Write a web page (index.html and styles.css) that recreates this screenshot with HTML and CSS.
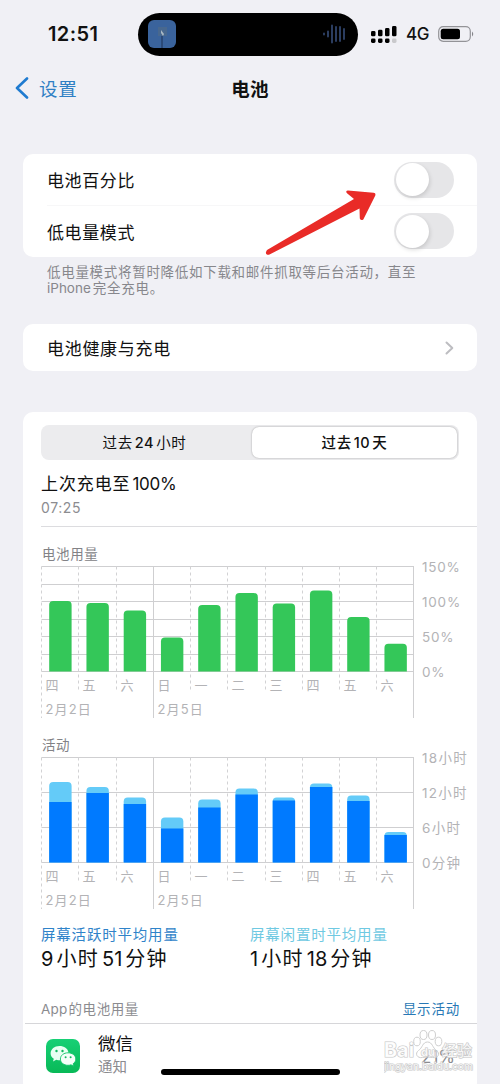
FILE: index.html
```html
<!DOCTYPE html>
<html lang="zh-CN">
<head>
<meta charset="utf-8">
<title>电池</title>
<link rel="stylesheet" href="styles.css">
</head>
<body>
<div class="phone">
  <header class="status">
    <span class="clock">12:51</span>
    <div class="island">
      <svg class="cover" width="28" height="28" viewBox="0 0 28 28"><rect width="28" height="28" rx="6" fill="#3a639c"/><rect x="10" y="7" width="9" height="9" fill="#48688f"/><path d="M13 10l3 4-1 2-2-3z" fill="#a9b9c4"/><path d="M14 16v12" stroke="#1d3355" stroke-width="1"/></svg>
      <svg class="wave" width="26" height="20" viewBox="0 0 26 20" stroke="#2b3d60" stroke-width="2" stroke-linecap="round"><path d="M2 9.500v1M6 7.500v5M10 1.500v17M14 3v14M18 3v14M22 5v10"/></svg>
    </div>
    <svg class="signal" width="27" height="19" viewBox="0 0 27 19"><g fill="#000"><rect x="0" y="6" width="4.500" height="5.300" rx="1.400"/><rect x="7" y="4.700" width="4.500" height="6.600" rx="1.400"/><rect x="14" y="3" width="4.500" height="8.300" rx="1.400"/><rect x="21" y="1" width="4.500" height="10.300" rx="1.400"/><rect x="0" y="13.400" width="4.500" height="4.600" rx="1.400"/><rect x="7" y="13.400" width="4.500" height="4.600" rx="1.400"/><rect x="14" y="13.400" width="4.500" height="4.600" rx="1.400"/></g><rect x="21" y="13.400" width="4.500" height="4.600" rx="1.400" fill="#c9c9cc"/></svg>
    <span class="net">4G</span>
    <svg class="battery" width="37" height="16" viewBox="0 0 37 16"><rect x=".7" y=".7" width="31.600" height="14.600" rx="4.500" fill="none" stroke="#939397" stroke-width="1.200"/><rect x="2.700" y="2.700" width="19.300" height="10.600" rx="2.500"/><path d="M34 5.500q2.500 2.500 0 5z" fill="#85858a"/></svg>
  </header>

  <nav class="nav">
    <a class="back"><svg width="14" height="22" viewBox="0 0 14 22"><path d="M12 1.500L2 11l10 9.500" fill="none" stroke="#1f7bd0" stroke-width="2.600" stroke-linecap="round" stroke-linejoin="round"/></svg><span>设置</span></a>
    <h1>电池</h1>
  </nav>

  <section class="card switches">
    <div class="row"><span>电池百分比</span><i class="toggle"></i></div>
    <div class="row"><span>低电量模式</span><i class="toggle"></i></div>
    <svg class="arrow" width="112" height="68" viewBox="0 0 112 68"><path d="M4.500 64.500L94.500 18.500L94.800 28.500Q96 31 98.300 29.500L110.300 5.500Q111 3 108.500 2.700L83 .5Q80 1 82 3.200L89 9L2 60Q0 63 1.500 64.300Q3 65.300 4.500 64.500Z" fill="#e92b27"/></svg>
  </section>
  <p class="hint">低电量模式将暂时降低如下载和邮件抓取等后台活动，直至<br><span class="latin">iPhone</span>完全充电。</p>

  <section class="card health">
    <span>电池健康与充电</span>
    <svg width="9" height="14" viewBox="0 0 9 14"><path d="M1.500 1.500L7.300 7l-5.800 5.500" fill="none" stroke="#bdbdc1" stroke-width="2" stroke-linecap="round" stroke-linejoin="round"/></svg>
  </section>

  <section class="card usage">
    <div class="segments"><span>过去<b>24</b>小时</span><span class="on">过去<b>10</b>天</span></div>
    <div class="last"><strong>上次充电至<b>100%</b></strong><small>07:25</small></div>

    <h2 class="chart-title">电池用量</h2>
    <svg class="chart" id="energy" width="436" height="166" viewBox="41 556 436 166"></svg>
    <h2 class="chart-title second">活动</h2>
    <svg class="chart" id="activity" width="436" height="166" viewBox="41 556 436 166"></svg>

    <div class="averages">
      <div><span class="active">屏幕活跃时平均用量</span><strong><b>9</b>小时<b>51</b>分钟</strong></div>
      <div><span class="idle">屏幕闲置时平均用量</span><strong><b>1</b>小时<b>18</b>分钟</strong></div>
    </div>
    <div class="apps-head"><span><b>App</b>的电池用量</span><a>显示活动</a></div>
    <div class="app">
      <svg width="34" height="34" viewBox="0 0 34 34"><defs><linearGradient id="g" x2="0" y2="1"><stop stop-color="#17d075"/><stop offset="1" stop-color="#08b957"/></linearGradient></defs><rect width="34" height="34" rx="7" fill="url(#g)"/><path d="M13.500 7C8.500 7 4.600 10.200 4.600 14.200c0 2.300 1.200 4.200 3.200 5.500L7 22.500l3.300-1.700q2 .6 4.200.5C21 21 22.800 17.500 22.500 13.600 22 9.500 18 7 13.500 7z" fill="#e8fff2"/><path d="M22 13.800c-4.300 0-7.600 2.700-7.600 6.200s3.300 6.300 7.600 6.300q1.500 0 3-.5l2.800 1.500-.7-2.500c1.700-1.200 2.700-2.900 2.700-4.800 0-3.500-3.500-6.200-7.800-6.200z" fill="#f4fff9" stroke="#0dc466" stroke-width=".9"/><g fill="#12b961"><circle cx="10.500" cy="12" r="1.200"/><circle cx="16.500" cy="12" r="1.200"/><circle cx="19.600" cy="18.300" r="1"/><circle cx="24.600" cy="18.300" r="1"/></g></svg>
      <div class="app-name"><span>微信</span><small>通知</small></div>
      <span class="share">21%</span>
    </div>
  </section>
  <div class="watermark">
    <svg width="92" height="46" viewBox="0 0 92 46"><g fill="#fff" stroke="#cfcfcf" stroke-width="1"><ellipse cx="33" cy="12.500" rx="3.300" ry="4.300"/><ellipse cx="39.500" cy="6" rx="3.500" ry="4.500"/><ellipse cx="48" cy="6" rx="3.500" ry="4.500"/><ellipse cx="54.500" cy="12.500" rx="3.300" ry="4.300"/><path d="M43.500 13c-5 0-5 6-9 8.500-4 3-1.500 8 4 7q5-1 10 0c6 1 8-4 4-7-4-2.500-4-8.500-9-8.500z" fill-opacity=".5"/></g><g class="mark"><text x="0" y="28" class="bai" textLength="30" lengthAdjust="spacingAndGlyphs">Bai</text><text x="37" y="27" class="du">du</text><text x="58" y="27" class="exp" textLength="30">经验</text><text x="0" y="41" class="url" textLength="89" lengthAdjust="spacingAndGlyphs">jingyan.baidu.com</text></g></svg>
  </div>
  <div class="home"></div>
</div>
<script src="charts.js"></script>
</body>
</html>
```
FILE: styles.css
```css
* { box-sizing: border-box; }
body { margin: 0; background: #f0f0f5; font-family: Inter, "Noto Sans CJK SC", sans-serif; color: #111; }
b, strong, h1, h2 { font-weight: 400; }
.phone { position: relative; width: 500px; height: 1084px; overflow: hidden; background: #f0f0f5; }

.status { display: flex; align-items: center; height: 68px; padding-left: 48px; }
.clock { width: 90px; font-size: 20px; font-weight: 600; letter-spacing: .4px; }
.island { display: flex; align-items: center; justify-content: space-between; width: 220px; height: 43px; padding: 0 10px; border-radius: 22px; background: #000; }
.signal { margin-left: 13px; }
.net { width: 33px; margin-left: 8px; font-size: 17px; font-weight: 500; letter-spacing: -.3px; }
.battery { margin-left: -1px; }

.nav { display: grid; grid-template-columns: 1fr auto 1fr; align-items: center; height: 39px; padding: 0 15px; }
.back { display: flex; align-items: center; gap: 10px; color: #2f7fc4; font-size: 18.500px; letter-spacing: .8px; }
.nav h1 { margin: 0; font-size: 18.500px; font-weight: 600; letter-spacing: .3px; }

.card { width: 454px; margin: 0 23px; border-radius: 10px; background: #fff; }
.switches { position: relative; height: 103px; margin-top: 47px; }
.row { display: flex; align-items: center; justify-content: space-between; height: 51px; margin-left: 24px; padding-right: 23px; font-size: 17px; letter-spacing: .6px; }
.row + .row { border-top: 1px solid #f7f7f8; height: 51px; }
.toggle { width: 60px; height: 36px; border-radius: 18px; background: #e6e6e8; padding: 1.500px; }
.toggle::before { content: ""; display: block; width: 33px; height: 33px; border-radius: 50%; background: #fff; box-shadow: 1px 2px 4px #0002; }
.arrow { position: absolute; left: 242px; top: 36px; }
.hint { height: 67px; margin: 0; padding: 7px 0 0 47px; color: #87878c; font-size: 13.500px; line-height: 16px; letter-spacing: .7px; white-space: nowrap; }
.latin { margin-right: 2px; letter-spacing: 0; }
.health { display: flex; align-items: center; justify-content: space-between; height: 47px; padding: 0 23px 0 24px; font-size: 17px; letter-spacing: .7px; }

.usage { height: 680px; margin-top: 41px; padding: 13px 0 0 18px; }
.segments { display: grid; grid-template-columns: 1fr 1fr; width: 418px; height: 35px; padding: 1px; border-radius: 8px; background: #ececee; text-align: center; font-size: 14.500px; line-height: 33px; letter-spacing: .6px; }
.segments span { padding-right: 3px; }
.segments .on { margin: 1px 1px 1px 2px; border-radius: 7px; background: #fff; box-shadow: 0 0 2px #0005; font-weight: 500; line-height: 31px; padding-right: 0; }
.segments b { margin: 0 2px; font-weight: 500; }
.last { height: 67px; padding-top: 12px; border-bottom: 1px solid #dcdcdf; }
.last strong, .last small { display: block; height: 24px; line-height: 25px; font-size: 17px; letter-spacing: .9px; }
.last b { margin-left: 2px; letter-spacing: -.3px; }
.last small { height: 23px; line-height: 23px; color: #8c8c90; font-size: 14px; letter-spacing: .6px; }
.chart-title { height: 20px; margin: 17px 0 0; padding-left: 1px; color: #828286; font-size: 13.500px; line-height: 20px; letter-spacing: .6px; }
.chart { display: block; margin-top: -8px; }
.chart-title.second { margin-top: 13px; }
.label { fill: #b3b3b6; font-size: 13px; letter-spacing: 1.100px; }
.scale { font-size: 13.500px; letter-spacing: .8px; }
.scale.hours { letter-spacing: 1.300px; }
.grid { stroke: #cfcfd1; fill: none; }
.dash { stroke: #d2d2d4; stroke-dasharray: 3 3; fill: none; }
.energy { fill: #34c759; }
.active-bar { fill: #007aff; }
.idle-bar { fill: #64cbf8; }

.averages { display: grid; grid-template-columns: 209px 1fr; height: 83px; padding-top: 11px; }
.averages span, .averages strong { display: block; height: 22px; line-height: 22px; }
.averages span { font-size: 14.500px; letter-spacing: .8px; }
.averages .active { color: #2f83c9; }
.averages .idle { color: #6fc9e2; }
.averages strong { height: 26px; line-height: 27px; font-size: 20px; letter-spacing: 1.300px; }
.averages strong b { margin-right: 3px; letter-spacing: 0; }
.averages strong b + b { margin-left: 3px; }
.apps-head { display: flex; justify-content: space-between; height: 28px; margin-left: -16px; padding: 0 17px 0 16px; border-bottom: 1px solid #d6d6d9; color: #8b8b8f; font-size: 13.500px; line-height: 26px; letter-spacing: .6px; }
.apps-head b { margin-right: 1px; letter-spacing: .2px; }
.apps-head a { color: #2878b5; letter-spacing: .8px; }
.app { display: flex; padding: 8px 22px 0 5px; }
.app > svg { margin-top: 7px; }
.app-name { flex: 1; margin-left: 18px; }
.app-name span, .app-name small { display: block; height: 24px; line-height: 24px; font-size: 17.500px; }
.app-name small { height: 22px; line-height: 22px; color: #8b8b8f; font-size: 14.500px; }
.share { margin-top: 15px; font-size: 17px; line-height: 20px; color: #8b8b8f; }
.watermark { position: absolute; left: 384px; top: 1029px; }
.mark { fill: #fff; fill-opacity: .85; stroke: #c8c8c8; stroke-width: 1.200px; paint-order: stroke; font-family: Inter, "Noto Sans CJK SC", sans-serif; }
.bai { font-size: 20px; font-weight: 700; }
.du { font-size: 11px; font-weight: 700; }
.exp { font-size: 15px; font-weight: 500; }
.url { font-size: 10px; }
.home { position: absolute; left: 161px; top: 1069px; width: 179px; height: 6px; border-radius: 3px; background: #000; }
```
FILE: charts.js
```js
const DAYS = ['四', '五', '六', '日', '一', '二', '三', '四', '五', '六'];
const LEFT = 41.5, RIGHT = 414, TOP = 566.5, BOTTOM = 671.5, STEP = 37.25;

function frame(step, labels, scaleClass) {
  let s = '';
  for (let y = TOP; y <= BOTTOM; y += step) s += `<path class="grid" d="M${LEFT} ${Math.floor(y) + .5}H${RIGHT}"/>`;
  for (let i = 0; i < 10; i++) {
    const x = Math.floor(LEFT + i * STEP) + .5;
    const end = i % 3 === 0 && i < 4 ? 718 : 692;
    s += `<path class="${i === 3 ? 'grid' : 'dash'}" d="M${x} ${TOP}V${end}"/>`;
    s += `<text class="label" x="${x + 4}" y="690">${DAYS[i]}</text>`;
  }
  s += `<path class="grid" d="M${RIGHT - .5} ${TOP}V718"/>`;
  s += '<text class="label" x="45.5" y="714">2月2日</text><text class="label" x="157.500" y="714">2月5日</text>';
  labels.forEach((t, i) => { s += `<text class="label scale ${scaleClass}" x="422" y="${572 + i * 35}">${t}</text>`; });
  return s;
}

function bar(i, top, cls, r) {
  const x = 49.2 + i * STEP, w = 22.4;
  return `<path class="${cls}" d="M${x} ${BOTTOM}V${top + r}q0 ${-r} ${r} ${-r}h${w - 2 * r}q${r} 0 ${r} ${r}V${BOTTOM}z"/>`;
}

const energy = [601, 603, 610.5, 637.5, 605, 593, 603.5, 590.5, 617, 643.8];
const total = [591, 596, 606.5, 626.5, 608.5, 597.5, 606.5, 592.5, 604.5, 641];
const active = [611, 602, 613, 637.5, 616.5, 603.5, 609.5, 596, 610, 644];

document.getElementById('energy').innerHTML =
  frame(17.5, ['150%', '100%', '50%', '0%'], 'percent') + energy.map((t, i) => bar(i, t, 'energy', 4)).join('');
document.getElementById('activity').innerHTML =
  frame(35, ['18小时', '12小时', '6小时', '0分钟'], 'hours') +
  total.map((t, i) => bar(i, t, 'idle-bar', 4) + bar(i, active[i], 'active-bar', 0)).join('');
```
